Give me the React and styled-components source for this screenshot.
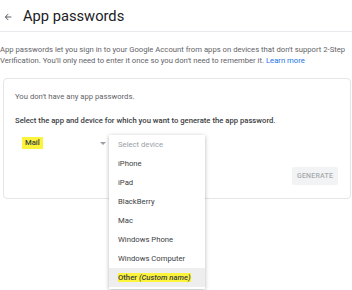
import styled, { createGlobalStyle } from "styled-components";

const GlobalStyle = createGlobalStyle`
  body {
    margin: 0;
    background: #fff;
    font-family: Roboto, "Liberation Sans", Arial, sans-serif;
    color: #5f6368;
  }
`;

const Page = styled.div`
  width: 352px;
  height: 290px;
  overflow: hidden;
`;

const Header = styled.div`
  display: flex;
  align-items: center;
  gap: 10px;
  height: 31px;
  padding-left: 3px;
  border-bottom: 1px solid #e8eaed;
`;

const BackArrow = styled.svg`
  width: 10px;
  height: 10px;
  margin-top: 3px;
`;

const Title = styled.h1`
  margin: 0;
  font-size: 14.7px;
  font-weight: 400;
  color: #202124;
`;

const Intro = styled.p`
  margin: 12px 0 0 0;
  font-size: 7.7px;
  line-height: 11px;
  color: #5f6368;
`;

const Link = styled.a`
  color: #1a73e8;
  text-decoration: none;
`;

const Card = styled.div`
  box-sizing: border-box;
  margin: 12px 0 0 3px;
  width: 348px;
  height: 121px;
  border: 1px solid #e3e5e8;
  border-radius: 4px;
  padding: 12px 12px 0 11px;
`;

const Empty = styled.div`
  font-size: 7.7px;
  line-height: 11px;
  color: #5f6368;
`;

const Prompt = styled.div`
  margin-top: 13px;
  font-size: 7.7px;
  line-height: 11px;
  font-weight: 500;
  color: #3c4043;
`;

const Controls = styled.div`
  display: flex;
  flex-direction: column;
  margin-top: 10px;
`;

const SelectBox = styled.div`
  position: relative;
  display: flex;
  align-items: center;
  width: 94px;
  height: 14px;
`;

const SelectedValue = styled.span`
  margin-left: 7px;
  padding: 1px 3px;
  background: #fbf43a;
  font-size: 7.7px;
  line-height: 10px;
  font-weight: 500;
  color: #3c4043;
`;

const Caret = styled.span`
  margin-left: auto;
  margin-right: 3px;
  width: 0;
  height: 0;
  border-left: 3px solid transparent;
  border-right: 3px solid transparent;
  border-top: 3px solid #9aa0a6;
`;

const Menu = styled.ul`
  position: absolute;
  left: 94px;
  top: -1px;
  width: 96px;
  margin: 0;
  padding: 0 0 2px 0;
  list-style: none;
  background: #fff;
  box-shadow: 0 1px 4px rgba(0, 0, 0, 0.3);
  z-index: 2;
`;

const MenuItem = styled.li`
  display: flex;
  align-items: center;
  height: 19px;
  padding-left: 9px;
  font-size: 7.7px;
  color: ${(p) => (p.$placeholder ? "#9aa0a6" : "#3c4043")};
  background: ${(p) => (p.$active ? "#eeeeee" : "transparent")};
`;

const Marked = styled.span`
  background: #fbf43a;
  font-weight: 500;
  color: #3c4043;
`;

const Generate = styled.button`
  align-self: flex-end;
  margin-top: 17px;
  width: 46px;
  height: 18px;
  padding: 0;
  border: none;
  border-radius: 2px;
  background: #f1f3f4;
  color: #a8abaf;
  font-family: Roboto, "Liberation Sans", Arial, sans-serif;
  font-size: 7px;
  font-weight: 500;
  letter-spacing: 0.2px;
`;

const devices = [
  "iPhone",
  "iPad",
  "BlackBerry",
  "Mac",
  "Windows Phone",
  "Windows Computer",
];

export default function App() {
  return (
    <Page>
      <GlobalStyle />
      <Header>
        <BackArrow viewBox="0 0 24 24">
          <path
            d="M20 11H7.8l5.6-5.6L12 4l-8 8 8 8 1.4-1.4L7.8 13H20v-2z"
            fill="#5f6368"
          />
        </BackArrow>
        <Title>App passwords</Title>
      </Header>
      <Intro>
        App passwords let you sign in to your Google Account from apps on
        devices that don't support 2-Step Verification. You'll only need to
        enter it once so you don't need to remember it.{" "}
        <Link href="#">Learn more</Link>
      </Intro>
      <Card>
        <Empty>You don't have any app passwords.</Empty>
        <Prompt>
          Select the app and device for which you want to generate the app
          password.
        </Prompt>
        <Controls>
          <SelectBox>
            <SelectedValue>Mail</SelectedValue>
            <Caret />
            <Menu>
              <MenuItem $placeholder>Select device</MenuItem>
              {devices.map((d) => (
                <MenuItem key={d}>{d}</MenuItem>
              ))}
              <MenuItem $active>
                <Marked>
                  Other <i>(Custom name)</i>
                </Marked>
              </MenuItem>
            </Menu>
          </SelectBox>
          <Generate>GENERATE</Generate>
        </Controls>
      </Card>
    </Page>
  );
}
